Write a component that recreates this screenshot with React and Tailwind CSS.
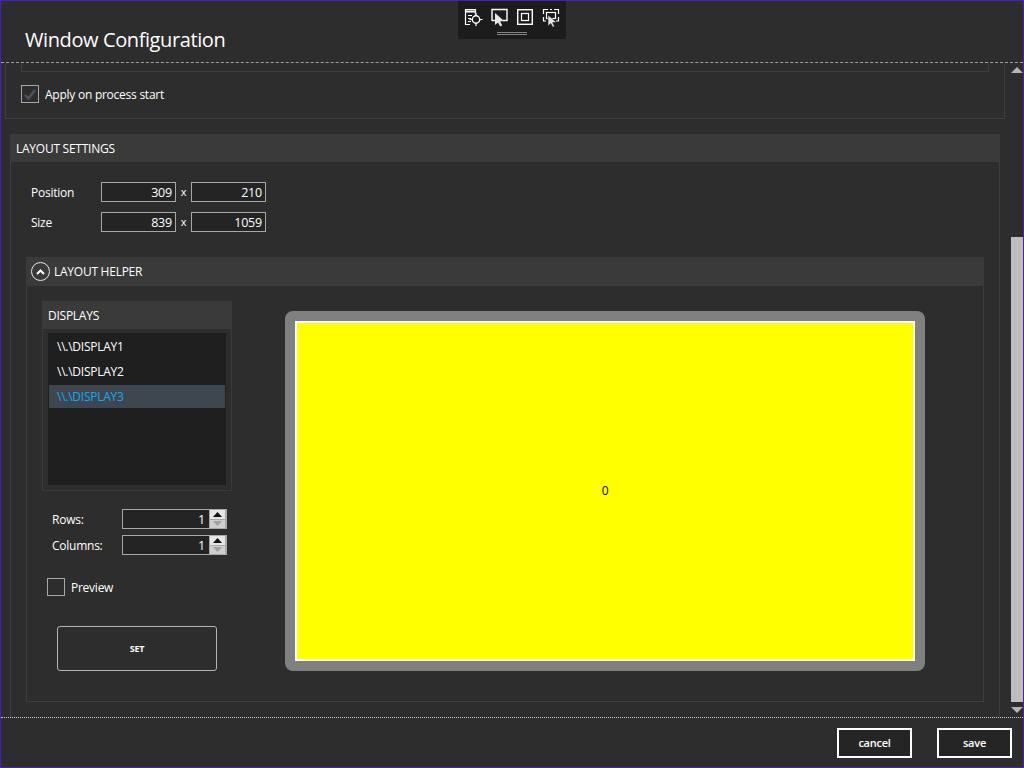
import { useState } from "react";

const font = "font-['Open_Sans','Noto_Sans',sans-serif]";

function ToolIcons() {
    return (
        <div className="absolute left-[457px] top-0 w-[108px] h-[38px] bg-[#1c1c1c] z-10">
            <svg width="108" height="38" viewBox="0 1 108 38" fill="none" stroke="#fff" strokeWidth="1.2">
                {/* document + target */}
                <path d="M12 24.5H7.5v-15h10v5" />
                <path d="M7.5 11.5h10" strokeWidth="2" />
                <path d="M10 15.5h4M10 18.5h3M10 21.5h3" />
                <circle cx="18" cy="19.5" r="3.7" strokeWidth="1.4" />
                <path d="M18 13v3M18 23v3M11.5 19.5h3M21.5 19.5h3" />
                {/* window + cursor */}
                <path d="M34 21V9.5h15v11h-4M34 20.5h3.5" strokeWidth="1.4" />
                <path d="M37 13v12l3-2.6 2.2 4 2-1.1-2.1-3.8 4-.4z" fill="#e8e8e8" stroke="none" />
                {/* maximize */}
                <rect x="59.7" y="9.7" width="14.6" height="14.6" strokeWidth="1.4" />
                <rect x="63.5" y="13.5" width="7" height="7" strokeWidth="1.2" />
                {/* full screen + cursor */}
                <path d="M85.5 14V9.5H90M96 9.5h4.5V14M85.5 17v4H88M100.5 17v4H98" strokeWidth="1.2" />
                <path d="M92 9.5h2" strokeWidth="1.2" />
                <rect x="88.5" y="12.5" width="9" height="6" />
                <path d="M90 15v11l2.8-2.4 2 3.7 1.8-1-2-3.6 3.8-.4z" fill="#e8e8e8" stroke="#1c1c1c" strokeWidth="0.6" />
                <path d="M39 32.5h30M39 34.5h30" stroke="#858585" strokeWidth="1" />
            </svg>
        </div>
    );
}

function NumField({ value }) {
    return (
        <div className="w-[75px] h-[20px] border border-[#a8a8a8] bg-[#242424] text-white text-[12.5px] leading-[19px] text-right pr-[3px] tracking-[-0.2px]">
            {value}
        </div>
    );
}

function Spinner({ value }) {
    return (
        <div className="w-[105px] h-[20px] flex border border-[#a8a8a8] bg-[#a8a8a8]">
            <div className="flex-1 bg-[#242424] text-white text-[12.5px] leading-[19px] text-right pr-[4px]">{value}</div>
            <div className="w-[17px] flex flex-col gap-[1px] pl-[1px] pr-[1px]">
                <div className="h-[8.5px] flex-1 bg-[#e6e6e6] flex items-center justify-center">
                    <svg width="9" height="5" viewBox="0 0 9 5"><path d="M0 5L4.5 0 9 5z" fill="#111" /></svg>
                </div>
                <div className="h-[8.5px] flex-1 bg-[#cfcfcf] flex items-center justify-center">
                    <svg width="9" height="5" viewBox="0 0 9 5"><path d="M0 0L4.5 5 9 0z" fill="#a0a0a0" /></svg>
                </div>
            </div>
        </div>
    );
}

export default function App() {
    const displays = ["\\\\.\\DISPLAY1", "\\\\.\\DISPLAY2", "\\\\.\\DISPLAY3"];
    const [selected, setSelected] = useState(2);
    const [preview, setPreview] = useState(false);

    return (
        <div className={`relative w-[1024px] h-[768px] overflow-hidden flex flex-col bg-[#2d2d2d] border border-[#4a1fb8] text-white tracking-[-0.25px] ${font}`}>
            <ToolIcons />

            {/* header */}
            <div className="h-[62px] shrink-0 pl-[24px] pt-[24px] text-[20px] leading-[30px] tracking-[-0.4px] text-white border-b border-dashed border-[#a0a0a0]">
                Window Configuration
            </div>

            {/* scroll area */}
            <div className="h-[654px] shrink-0 flex overflow-hidden">
                <div className="w-[1010px] shrink-0">
                    {/* apply panel */}
                    <div className="ml-[4px] w-[1000px] h-[56px] border-x border-b border-[#3e3e3e] pl-[15px]">
                        <div className="w-[968px] h-[9px] border-x border-b border-[#3e3e3e]" />
                        <label className="mt-[13px] flex items-start gap-[6px] text-[12px] leading-[18px]">
                            <span className="w-[18px] h-[18px] border border-[#a8a8a8] flex items-center justify-center">
                                <svg width="12" height="11" viewBox="0 0 12 11" fill="none"><path d="M1 6l3.5 3.5L11 1" stroke="#4d5560" strokeWidth="2.4" /></svg>
                            </span>
                            <span className="pt-[1px]">Apply on process start</span>
                        </label>
                    </div>

                    {/* layout settings */}
                    <div className="ml-[9px] mt-[15px] w-[990px]">
                        <div className="h-[28px] bg-[#3a3a3a] pl-[6px] text-[12px] leading-[30px]">LAYOUT SETTINGS</div>
                        <div className="h-[560px] border-x border-[#3e3e3e] pl-[15px] pr-[15px] pt-[20px]">
                            <div className="flex items-center h-[20px] text-[12px]">
                                <span className="w-[75px] pl-[5px] pt-[2px]">Position</span>
                                <NumField value="309" />
                                <span className="w-[15px] text-center text-[11px]">x</span>
                                <NumField value="210" />
                            </div>
                            <div className="mt-[10px] flex items-center h-[20px] text-[12px]">
                                <span className="w-[75px] pl-[5px] pt-[2px]">Size</span>
                                <NumField value="839" />
                                <span className="w-[15px] text-center text-[11px]">x</span>
                                <NumField value="1059" />
                            </div>

                            {/* layout helper */}
                            <div className="mt-[25px] w-[958px]">
                                <div className="h-[29px] bg-[#3a3a3a] flex items-center pl-[5px] gap-[4px] text-[12px]">
                                    <span className="w-[19px] h-[19px] rounded-full border border-[#e8e8e8] flex items-center justify-center">
                                        <svg width="9" height="6" viewBox="0 0 9 6" fill="none"><path d="M1 5l3.5-3.5L8 5" stroke="#fff" strokeWidth="2" /></svg>
                                    </span>
                                    LAYOUT HELPER
                                </div>
                                <div className="h-[416px] border-x border-b border-[#3e3e3e] flex pl-[15px] pt-[15px]">
                                    <div className="w-[243px] shrink-0">
                                        {/* displays */}
                                        <div className="w-[190px] h-[190px] border-x border-b border-[#3a3a3a] flex flex-col">
                                            <div className="h-[28px] -mx-px bg-[#3a3a3a] pl-[6px] text-[12px] leading-[30px]">DISPLAYS</div>
                                            <div className="mx-[5px] mt-[4px] h-[152px] bg-[#1f1f1f] pl-[1px] pt-[1px]">
                                                {displays.map((d, i) => (
                                                    <div
                                                        key={d}
                                                        onClick={() => setSelected(i)}
                                                        className={`w-[176px] pl-[8px] text-[12px] cursor-pointer ${
                                                            i === selected
                                                                ? "h-[23px] my-[1px] leading-[24px] bg-[#3e4750] text-[#14a8f0]"
                                                                : "h-[25px] leading-[26px] text-white"
                                                        }`}
                                                    >
                                                        {d}
                                                    </div>
                                                ))}
                                            </div>
                                        </div>

                                        <div className="mt-[18px] flex items-center h-[20px] text-[12px]">
                                            <span className="w-[80px] pl-[10px] pt-[2px]">Rows:</span>
                                            <Spinner value="1" />
                                        </div>
                                        <div className="mt-[6px] flex items-center h-[20px] text-[12px]">
                                            <span className="w-[80px] pl-[10px] pt-[2px]">Columns:</span>
                                            <Spinner value="1" />
                                        </div>

                                        <label className="mt-[23px] ml-[5px] h-[18px] flex items-start gap-[6px] text-[12px] leading-[18px]" onClick={() => setPreview(!preview)}>
                                            <span className="w-[18px] h-[18px] border border-[#a8a8a8]" />
                                            <span className="pt-[1px]">Preview</span>
                                        </label>

                                        <button className="mt-[30px] ml-[15px] block w-[160px] h-[45px] border border-[#b4b4b4] rounded-[3px] text-[9px] font-bold text-white cursor-pointer">
                                            SET
                                        </button>
                                    </div>

                                    {/* preview */}
                                    <div className="mt-[10px] w-[640px] h-[360px] bg-[#808080] rounded-[8px] p-[10px] shrink-0">
                                        <div className="h-full border-2 border-white bg-[#ffff00] text-black text-[12px] flex items-center justify-center">0</div>
                                    </div>
                                </div>
                            </div>
                        </div>
                    </div>
                </div>

                {/* scrollbar */}
                <div className="flex-1 relative">
                    <svg className="absolute left-0 top-[4px]" width="12" height="6" viewBox="0 0 12 6"><path d="M0 6L6 0l6 6z" fill="#b4b4b4" /></svg>
                    <div className="absolute left-0 right-0 top-[174px] h-[465px] bg-[#bdbdbd]" />
                    <svg className="absolute left-0 top-[644px]" width="12" height="6" viewBox="0 0 12 6"><path d="M0 0l6 6 6-6z" fill="#b4b4b4" /></svg>
                </div>
            </div>

            {/* footer */}
            <div className="flex-1 border-t border-dotted border-[#d0d0d0] flex justify-end gap-[25px] pr-[11px] pt-[10px]">
                <button className="w-[75px] h-[30px] border-2 border-white bg-[#252525] text-[11px] font-semibold text-white">cancel</button>
                <button className="w-[75px] h-[30px] border-2 border-white bg-[#252525] text-[11px] font-semibold text-white">save</button>
            </div>
        </div>
    );
}
